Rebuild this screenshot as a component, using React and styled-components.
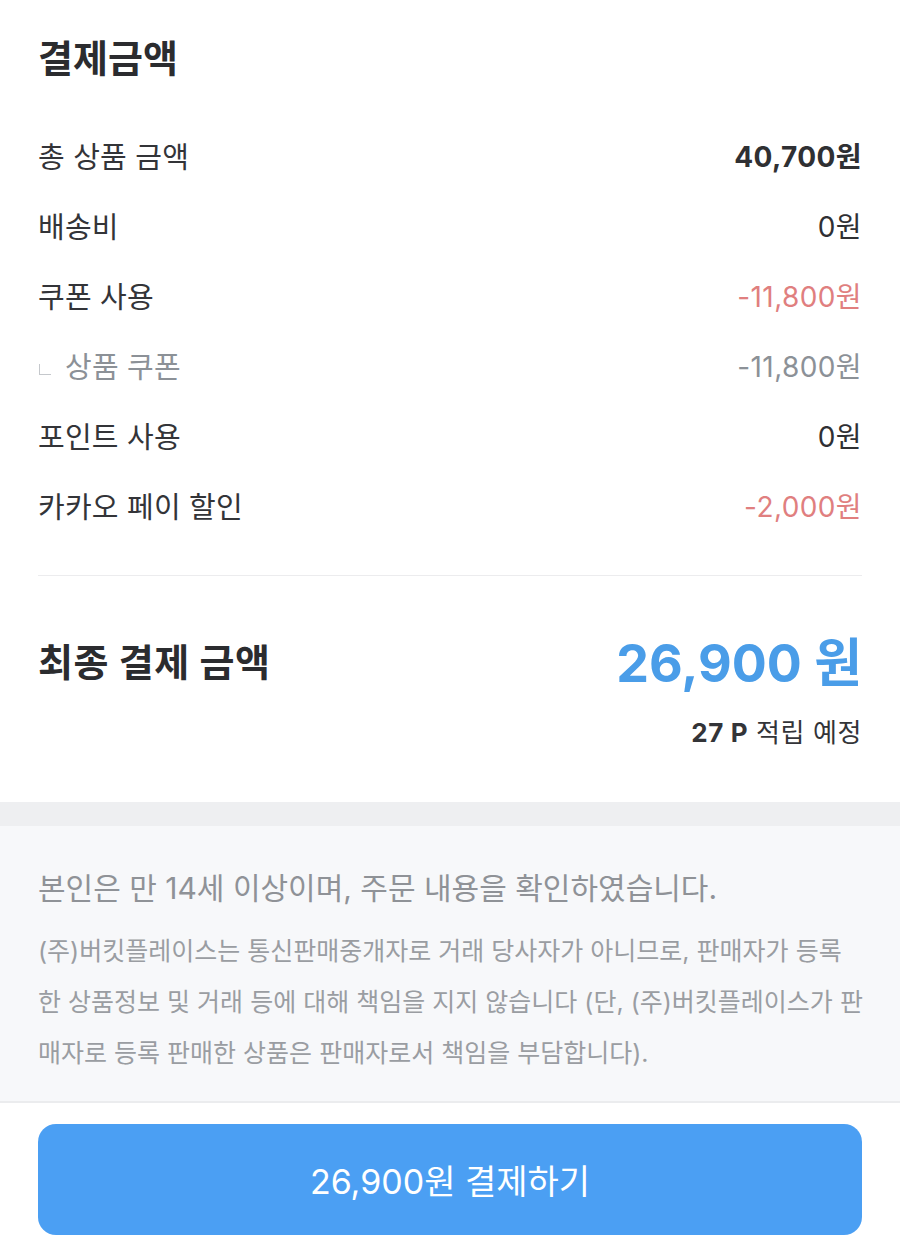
import React from "react";
import styled, { createGlobalStyle } from "styled-components";

const GlobalStyle = createGlobalStyle`
  body {
    margin: 0;
    background: #fff;
    font-family: "Inter", "Noto Sans CJK KR", sans-serif;
    color: #2f3033;
  }
`;

const rows = [
  { label: "총 상품 금액", value: "40,700원", strong: true },
  { label: "배송비", value: "0원" },
  { label: "쿠폰 사용", value: "-11,800원", tone: "minus" },
  { label: "상품 쿠폰", value: "-11,800원", tone: "sub", sub: true },
  { label: "포인트 사용", value: "0원" },
  { label: "카카오 페이 할인", value: "-2,000원", tone: "minus" },
];

// the legal copy wraps mid-word in the app, so keep its three lines as they are
const legalLines = [
  "(주)버킷플레이스는 통신판매중개자로 거래 당사자가 아니므로, 판매자가 등록",
  "한 상품정보 및 거래 등에 대해 책임을 지지 않습니다 (단, (주)버킷플레이스가 판",
  "매자로 등록 판매한 상품은 판매자로서 책임을 부담합니다).",
];

const App = () => {
  return (
    <Page>
      <GlobalStyle />
      <Summary>
        <Title>결제금액</Title>
        <List>
          {rows.map((row) => (
            <Row key={row.label}>
              <Label $sub={row.sub}>
                {row.sub && <Corner />}
                {row.label}
              </Label>
              <Value $tone={row.tone} $strong={row.strong}>
                {row.value}
              </Value>
            </Row>
          ))}
        </List>
        <Divider />
        <TotalRow>
          <TotalLabel>최종 결제 금액</TotalLabel>
          <TotalValue>26,900 원</TotalValue>
        </TotalRow>
        <PointNote>
          <b>27 P</b> 적립 예정
        </PointNote>
      </Summary>
      <Band />
      <Notice>
        <Agree>본인은 만 14세 이상이며, 주문 내용을 확인하였습니다.</Agree>
        <Legal>
          {legalLines.map((line) => (
            <LegalLine key={line}>{line}</LegalLine>
          ))}
        </Legal>
      </Notice>
      <Footer>
        <PayButton type="button">26,900원 결제하기</PayButton>
      </Footer>
    </Page>
  );
};

const Page = styled.div`
  width: 900px;
  min-height: 1239px;
  display: flex;
  flex-direction: column;
  background: #fff;
`;

const Summary = styled.section`
  padding: 30px 38px 51px;
  display: flex;
  flex-direction: column;
`;

const Title = styled.h2`
  margin: 0 0 34px;
  font-size: 38px;
  line-height: 56px;
  font-weight: 700;
  color: #2b2c2f;
`;

const List = styled.div`
  display: flex;
  flex-direction: column;
`;

const Row = styled.div`
  height: 70px;
  display: flex;
  align-items: center;
  justify-content: space-between;
`;

const Label = styled.span`
  display: flex;
  align-items: center;
  font-size: 29px;
  letter-spacing: 0.2px;
  color: ${(p) => (p.$sub ? "#8c9197" : "#333438")};
`;

const Corner = styled.span`
  width: 11px;
  height: 10px;
  margin: 0 14px 0 1px;
  border-left: 1.5px solid #c5c8cc;
  border-bottom: 1.5px solid #c5c8cc;
  transform: translateY(4px);
`;

const Value = styled.span`
  font-size: 28px;
  letter-spacing: 0.4px;
  font-weight: ${(p) => (p.$strong ? 700 : 400)};
  color: ${(p) =>
    p.$tone === "minus" ? "#e07f7f" : p.$tone === "sub" ? "#8c9197" : "#2f3033"};
`;

const Divider = styled.hr`
  margin: 35px 0 0;
  border: none;
  border-top: 1.5px solid #ececee;
`;

const TotalRow = styled.div`
  margin-top: 43px;
  height: 80px;
  display: flex;
  align-items: center;
  justify-content: space-between;
`;

const TotalLabel = styled.span`
  font-size: 38px;
  font-weight: 700;
  letter-spacing: 0.6px;
  color: #2b2c2f;
`;

const TotalValue = styled.span`
  font-size: 52px;
  font-weight: 700;
  color: #4a9de8;
`;

const PointNote = styled.div`
  margin-top: 16px;
  line-height: 36px;
  text-align: right;
  font-size: 26px;
  letter-spacing: 0.6px;
  color: #333438;

  b {
    font-weight: 700;
  }
`;

const Band = styled.div`
  height: 24px;
  background: #eeeff1;
`;

const Notice = styled.section`
  background: #f7f8fa;
  padding: 44px 38px 22px;
  border-bottom: 2px solid #ebecee;
`;

const Agree = styled.p`
  margin: 0 0 20px;
  font-size: 30px;
  line-height: 36px;
  color: #8f9297;
`;

const Legal = styled.div`
  display: flex;
  flex-direction: column;
`;

const LegalLine = styled.span`
  font-size: 25px;
  line-height: 51px;
  white-space: nowrap;
  color: #9a9da2;
`;

const Footer = styled.div`
  padding: 21px 38px 6px;
  background: #fff;
`;

const PayButton = styled.button`
  width: 100%;
  height: 111px;
  border: none;
  border-radius: 18px;
  background: #4b9ff3;
  color: #fff;
  font-family: inherit;
  font-size: 34px;
  font-weight: 400;
`;

export default App;
